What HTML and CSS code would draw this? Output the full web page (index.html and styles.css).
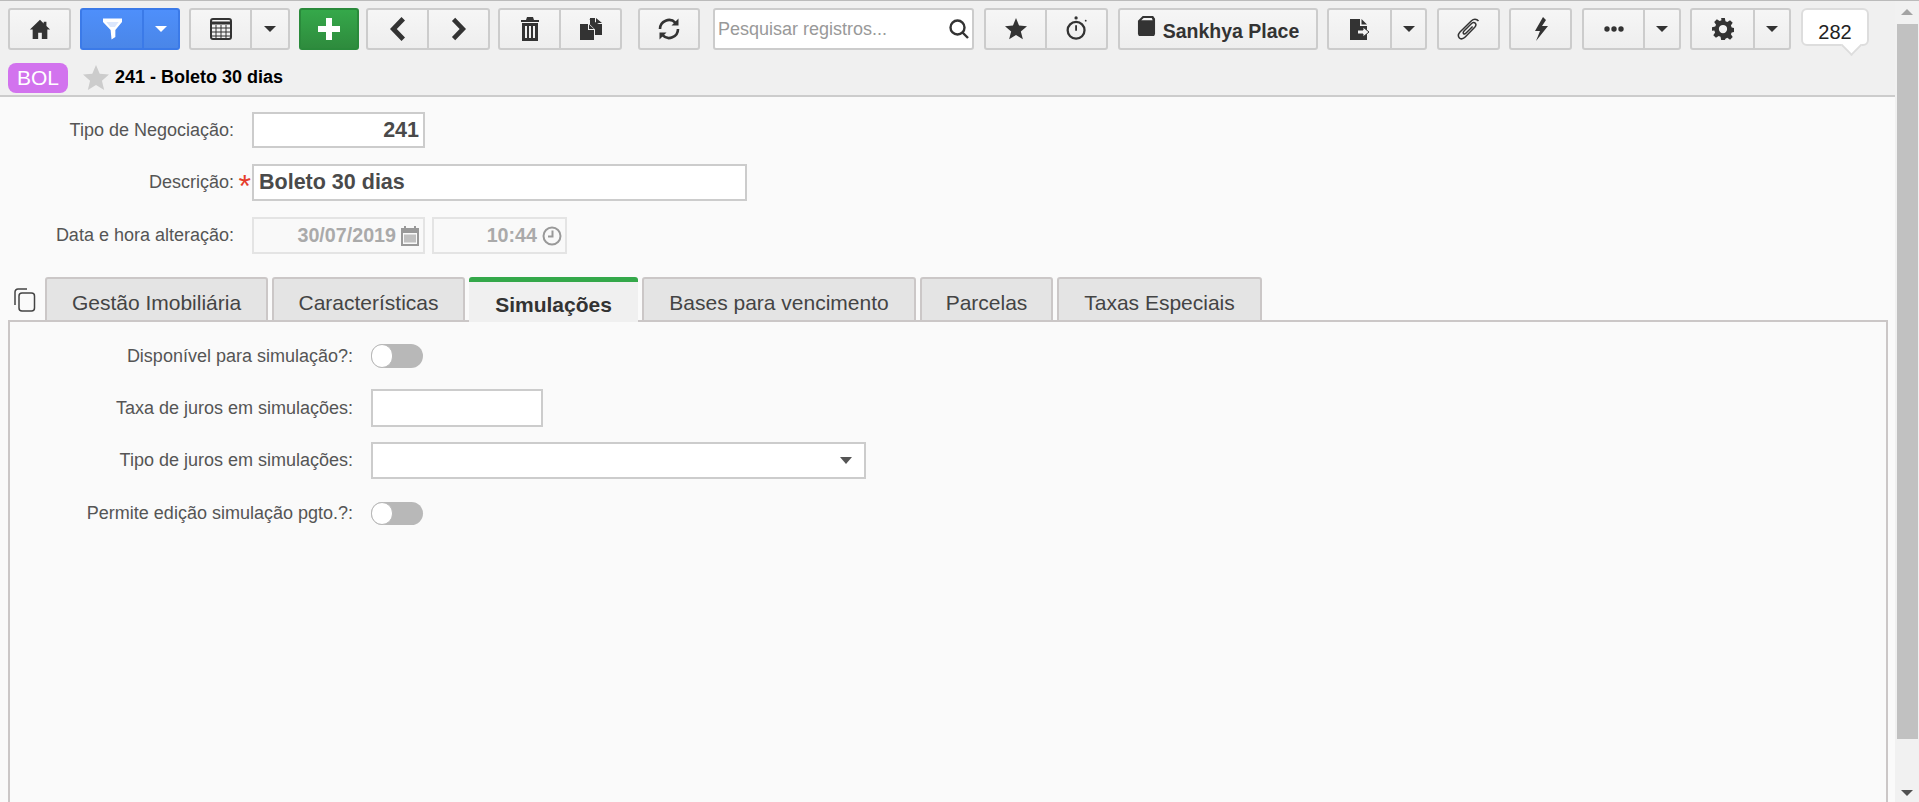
FILE: index.html
```html
<!DOCTYPE html>
<html lang="pt-BR">
<head>
<meta charset="utf-8">
<title>Tipo de Negociação</title>
<link rel="stylesheet" href="styles.css">
</head>
<body>
<div class="page">
  <main class="main">
    <header class="head">
      <div class="toolbar">
        <div class="group g63"><button class="btn"><svg class="ico" viewBox="0 0 24 24" width="22" height="22"><path d="M12 2 1 12.500h3V23h6v-7h4v7h6V12.500h3l-4-3.800V4h-3v1.900z"/></svg></button></div>
        <div class="group g100 split blue">
          <button class="btn"><svg viewBox="0 0 20 22" width="19" height="22"><path d="M0 0h20v3.500L13 12v7.500L9 22l-1-10L0 3.500z" fill="#fff"/><path d="M3.500 3.500h13L12.500 9h-5z" fill="#dbe7fd"/></svg></button>
          <button class="btn"><span class="caret white"></span></button>
        </div>
        <div class="group g101 split s59">
          <button class="btn"><svg viewBox="0 0 22 22" width="22" height="22" fill="none" stroke="#333"><rect x="1" y="1" width="20" height="20" rx="2" stroke-width="2"/><path d="M1 5h20" stroke-width="3"/><path d="M1 10h20M1 14h20M1 18h20M6 7v14M11 7v14M16 7v14" stroke-width="1"/></svg></button>
          <button class="btn"><span class="caret"></span></button>
        </div>
        <div class="group g60 green"><button class="btn"><svg viewBox="0 0 22 22" width="22" height="22" fill="#fff"><path d="M8 0h6v8h8v6h-8v8H8v-8H0V8h8z"/></svg></button></div>
        <div class="group g124 m8">
          <button class="btn"><svg class="ico" viewBox="0 0 16 24" width="16" height="24"><path d="M11.500 0 15 3.500 6.800 12 15 20.500 11.500 24 0 12z"/></svg></button>
          <button class="btn"><svg class="ico" viewBox="0 0 16 24" width="15" height="24"><path d="M4.500 0 1 3.500 9.200 12 1 20.500 4.500 24 16 12z"/></svg></button>
        </div>
        <div class="group g124 m8">
          <button class="btn"><svg class="ico" viewBox="0 0 18 24" width="18" height="24"><path d="M6 0h6l1 3h5v2H0V3h5zM1 6h16v18H1zm3 3v12h2V9zm4 0v12h2V9zm4 0v12h2V9z" fill-rule="evenodd"/></svg></button>
          <button class="btn"><svg class="ico" viewBox="0 0 22 22" width="22" height="22"><path d="M0 6h8v6h6v10H0zM9 6.500l5 4.500H9z"/><path d="M9 1h5v5h5v0z"/><path d="M10 0h5v6h7v11h-7v-5.500L9.500 6H10zM16 0l6 5h-6z"/></svg></button>
        </div>
        <div class="group g62 m13">
          <button class="btn"><svg viewBox="0 0 24 24" width="24" height="24" fill="none" stroke="#333" stroke-width="2.600"><path d="M3 12a9 9 0 0 1 15.500-6.200M21 12a9 9 0 0 1-15.500 6.200"/><path d="M21.500 1.500v7h-7z" fill="#333" stroke="none"/><path d="M2.500 22.500v-7h7z" fill="#333" stroke="none"/></svg></button>
        </div>
        <div class="group search m10">
          <span class="search-text">Pesquisar registros...</span>
          <svg viewBox="0 0 20 20" width="20" height="20" fill="none" stroke="#333" stroke-width="2.400"><circle cx="8.500" cy="8.500" r="7"/><path d="m13 13 6 6"/></svg>
        </div>
        <div class="group g124 m10">
          <button class="btn"><svg class="ico" viewBox="0 0 24 24" width="22" height="22"><path d="m12 0 3.300 8.300 8.700.7-6.700 5.600 2.200 8.700L12 18.500 4.500 23.300l2.200-8.700L0 9l8.700-.7z"/></svg></button>
          <button class="btn"><svg class="timer" viewBox="0 0 24 26" width="22" height="24" fill="none" stroke="#333" stroke-width="2.500"><circle cx="11" cy="15.500" r="9.200"/><circle cx="11" cy="2" r="1.800" fill="#333" stroke="none"/><path d="M11 10v6" stroke-width="2"/><circle cx="21.500" cy="5" r="1" fill="#333" stroke="none"/></svg></button>
        </div>
        <div class="group g200"><button class="btn place"><svg class="ico bag" viewBox="0 0 20 22" width="19" height="21"><path d="M1 6 6 1h11l2 3v16l-1 2H2l-1-2zM4.500 5.500h12L15.500 3H7z" fill-rule="evenodd"/></svg><span class="place-text">Sankhya Place</span></button></div>
        <div class="group g100 split s61 m10">
          <button class="btn"><svg viewBox="0 0 20 21" width="20" height="21"><path d="M0 0h10v7h7v14H0z" fill="#333"/><path d="M11.500 0 17 5.500h-5.500z" fill="#333"/><path d="M7.500 11H13V8l6 5-6 5v-3H7.500z" fill="#f2f2f2" stroke="#333"/></svg></button>
          <button class="btn"><span class="caret"></span></button>
        </div>
        <div class="group g63"><button class="btn"><svg viewBox="0 0 24 22" width="24" height="22" fill="none" stroke="#333" stroke-width="1.500"><path d="M21.500 3c-2-2.500-5-2.300-7-.3L3 14c-2 2.300-2 4.500-.6 6s3.800 1 5.800-1l9.500-9.700c1.500-1.700 1.500-3 .6-4s-2.500-1-4 .5L7 13c-1 1.200-1 2-.4 2.600s1.500.4 2.500-.6l6.500-6.500"/></svg></button></div>
        <div class="group g63 m10"><button class="btn"><svg class="ico" viewBox="0 0 14 24" width="14" height="24"><path d="M9 0 1 14h5L2 24l12-15H8l4-6z"/></svg></button></div>
        <div class="group g99 split s59">
          <button class="btn"><svg class="ico" viewBox="0 0 20 6" width="20" height="6"><circle cx="3" cy="3" r="2.700"/><circle cx="10" cy="3" r="2.700"/><circle cx="17" cy="3" r="2.700"/></svg></button>
          <button class="btn"><span class="caret"></span></button>
        </div>
        <div class="group g101 split s61 m10">
          <button class="btn"><svg class="ico" viewBox="0 0 24 24" width="22" height="22"><path d="M10 0h4l.7 3.500 2 .9 3-2 2.900 2.900-2 3 .9 2 3.500.7v4l-3.500.7-.9 2 2 3-2.900 2.900-3-2-2 .9L14 24h-4l-.7-3.500-2-.9-3 2-2.900-2.900 2-3-.9-2L0 14v-4l3.500-.7.9-2-2-3L5.300 1.400l3 2 2-.9zM12 7.500a4.500 4.500 0 1 0 0 9 4.500 4.500 0 0 0 0-9z" fill-rule="evenodd"/></svg></button>
          <button class="btn"><span class="caret"></span></button>
        </div>
        <div class="counter"><span class="count">282</span></div>
      </div>
      <div class="title-row">
        <span class="badge">BOL</span>
        <svg viewBox="0 0 28 28" width="26" height="26" fill="#ccc"><path d="m14 0 4 9.500 10 .8-7.600 6.600 2.400 10L14 21.600 5.200 27l2.400-10L0 10.300l10-.8z"/></svg>
        <span class="title">241 - Boleto 30 dias</span>
      </div>
    </header>
    <section class="form">
      <div class="row r1"><label class="lbl">Tipo de Negociação:</label><div class="inp short num">241</div></div>
      <div class="row r2"><label class="lbl">Descrição:<span class="req">*</span></label><div class="inp long strong">Boleto 30 dias</div></div>
      <div class="row r3"><label class="lbl">Data e hora alteração:</label>
        <div class="inp short dis">30/07/2019<svg viewBox="0 0 18 20" width="18" height="20" fill="#999"><path d="M3 0h2v2h8V0h2v2h3v18H0V2h3zM2 7v11h14V7z" fill-rule="evenodd"/><path d="M3 8.500h12v8H3z" opacity=".6"/></svg></div>
        <div class="inp time dis">10:44<svg viewBox="0 0 20 20" width="20" height="20" fill="none" stroke="#999" stroke-width="2"><circle cx="10" cy="10" r="8.500"/><path d="M10.500 4.500v6H6"/></svg></div>
      </div>
      <div class="tabs">
        <svg class="copy" viewBox="0 0 24 24" width="24" height="24" fill="none" stroke="#444" stroke-width="1.500"><path d="M2 17V4a3 3 0 0 1 3-3h9"/><rect x="6" y="5" width="15.500" height="18" rx="3"/></svg>
        <div class="tab t1">Gestão Imobiliária</div>
        <div class="tab t2">Características</div>
        <div class="tab t3 active">Simulações</div>
        <div class="tab t4">Bases para vencimento</div>
        <div class="tab t5">Parcelas</div>
        <div class="tab t6">Taxas Especiais</div>
      </div>
      <div class="panel">
        <div class="prow p1"><label class="plbl">Disponível para simulação?:</label><span class="toggle"><span class="knob"></span></span></div>
        <div class="prow p2"><label class="plbl">Taxa de juros em simulações:</label><div class="inp rate"></div></div>
        <div class="prow p3"><label class="plbl">Tipo de juros em simulações:</label><div class="inp select"><span class="caret dark"></span></div></div>
        <div class="prow p4"><label class="plbl">Permite edição simulação pgto.?:</label><span class="toggle"><span class="knob"></span></span></div>
      </div>
    </section>
  </main>
  <aside class="scrollbar">
    <span class="arrow up"></span>
    <span class="thumb"></span>
    <span class="arrow down"></span>
  </aside>
</div>
</body>
</html>
```
FILE: styles.css
```css
* { box-sizing: border-box; }
html, body { margin: 0; height: 100%; overflow: hidden; }
body { font-family: "Liberation Sans", Arial, sans-serif; color: #333; background: #fafafa; }
.page { display: flex; height: 802px; border-top: 1px solid #bbb; }
.main { width: 1895px; display: flex; flex-direction: column; overflow: hidden; }
.head { height: 96px; background: #f0f0f0; border-bottom: 2px solid #ccc; padding: 7px 0 0 8px; }
.toolbar { display: flex; height: 43px; }
.group { display: flex; flex: none; height: 42px; margin-right: 9px; border: 2px solid #ccc; border-radius: 3px; background: linear-gradient(#f6f6f6, #eee); }
.m8 { margin-right: 8px; }
.m10 { margin-right: 10px; }
.m13 { margin-right: 13px; }
.g60 { width: 60px; margin-right: 7px; }
.g62 { width: 62px; }
.g63 { width: 63px; }
.g99 { width: 99px; }
.g100 { width: 100px; }
.g101 { width: 101px; }
.g124 { width: 124px; }
.g200 { width: 200px; }
.g124.m8 { margin-right: 8px; }
.g124.m10 { margin-right: 10px; }
.g62.m13 { margin-left: 8px; }
.btn { flex: 1 1 0; display: flex; align-items: center; justify-content: center; height: 100%; padding: 0; background: none; border: 0; border-left: 2px solid #ccc; font: inherit; color: #333; }
.btn:first-child { border-left: 0; }
.split .btn:first-child { flex: none; width: 60px; }
.split.s59 .btn:first-child { width: 59px; }
.split.s61 .btn:first-child { width: 61px; }
.ico { fill: #333; }
.blue { background: linear-gradient(#4e8ffb, #4a86e8); border-color: #3b7ae8; }
.blue .btn { border-color: #3b7ae8; }
.green { background: linear-gradient(#35a84a, #2e8b3d); border-color: #2a8a3b; }
.caret { display: block; width: 0; height: 0; border-left: 6.500px solid transparent; border-right: 6.500px solid transparent; border-top: 6.500px solid #333; }
.caret.white { border-top-color: #fff; }
.search { width: 261px; background: #fff; align-items: center; justify-content: space-between; padding: 0 3px 0 3px; }
.search-text { font-size: 18px; color: #999; }
.timer { margin-top: -3px; }
.place { gap: 7px; }
.bag { margin-bottom: 8px; }
.place-text { margin-top: 4px; font-size: 19.500px; font-weight: 700; }
.counter { position: relative; flex: none; width: 68px; height: 38px; border: 2px solid #ddd; border-radius: 6px; background: #fff; font-size: 20px; color: #222; text-align: center; line-height: 44px; }
.counter::after { content: ""; position: absolute; right: 8px; bottom: -9px; width: 13px; height: 13px; background: #fff; border-right: 2px solid #ddd; border-bottom: 2px solid #ddd; transform: rotate(45deg); }
.count { position: relative; z-index: 1; }
.title-row { display: flex; align-items: center; gap: 6px; height: 31px; margin-top: 11px; }
.badge { width: 60px; height: 30px; border-radius: 8px; background: #d273ee; color: #fff; font-size: 21px; text-align: center; line-height: 30px; margin-right: 9px; }
.title { font-size: 18px; font-weight: 700; color: #000; }
.form { flex: 1; display: flex; flex-direction: column; padding: 0; }
.row { display: flex; align-items: center; gap: 7px; height: 37px; }
.r1 { margin-top: 15px; height: 36px; }
.r2 { margin-top: 16px; }
.r3 { margin-top: 16px; }
.lbl { position: relative; width: 234px; margin-right: 11px; text-align: right; font-size: 18px; color: #555; white-space: nowrap; }
.req { position: absolute; right: -17px; top: -2px; color: #e53c2b; font-size: 32px; line-height: 32px; }
.inp { display: flex; align-items: center; height: 100%; background: #fff; border: 2px solid #ccc; font-size: 21.500px; font-weight: 700; color: #4a4a4a; }
.short { width: 173px; justify-content: flex-end; padding: 0 4px; }
.long { width: 495px; padding: 0 5px; }
.time { width: 135px; justify-content: flex-end; padding: 0 3px; }
.dis { background: #f9f9f9; border-color: #e4e4e4; color: #aaa; gap: 5px; font-size: 19.700px; }
.tabs { position: relative; display: flex; gap: 4px; height: 43px; margin-top: 23px; padding-left: 45px; }
.copy { position: absolute; left: 13px; top: 11px; }
.tab { display: flex; align-items: center; justify-content: center; height: 45px; background: #e4e4e4; border: 2px solid #cbc7c7; border-radius: 3px 3px 0 0; font-size: 21px; color: #444; position: relative; z-index: 0; padding-top: 6px; }
.t1 { width: 223px; }
.t2 { width: 193px; }
.t3 { width: 169px; }
.t4 { width: 274px; }
.t5 { width: 133px; }
.t6 { width: 205px; }
.tab.active { background: #f0f0f0; border: 0; border-top: 5px solid #34a84a; font-weight: 700; color: #333; z-index: 2; height: 45px; padding-top: 5px; }
.panel { position: relative; z-index: 1; flex: 1; width: 1880px; margin-left: 8px; margin-bottom: -20px; background: #fafafa; border: 2px solid #cbc7c7; }
.prow { display: flex; align-items: center; }
.plbl { width: 343px; margin-right: 18px; text-align: right; font-size: 18px; color: #555; white-space: nowrap; }
.p1 { height: 24px; margin-top: 22px; }
.p2 { height: 38px; margin-top: 21px; }
.p3 { height: 37px; margin-top: 15px; }
.p4 { height: 23px; margin-top: 23px; }
.rate { width: 172px; }
.select { width: 495px; justify-content: flex-end; padding-right: 12px; }
.caret.dark { border-left-width: 6px; border-right-width: 6px; border-top-width: 7px; border-top-color: #555; }
.toggle { display: block; position: relative; width: 52px; height: 100%; background: #b8b8b8; border-radius: 12px; }
.knob { position: absolute; left: 0; top: 0; width: 22px; height: 100%; background: #fff; border: 1px solid #b8b8b8; border-radius: 12px; }
.scrollbar { position: relative; display: flex; flex-direction: column; align-items: center; width: 24px; background: #f1f1f1; }
.thumb { position: absolute; left: 2px; right: 1px; top: 23px; height: 715px; background: #c1c1c1; }
.arrow { position: absolute; left: 6px; width: 0; height: 0; border-left: 6px solid transparent; border-right: 6px solid transparent; }
.arrow.up { top: 8px; border-bottom: 6px solid #a3a3a3; }
.arrow.down { top: 789px; border-top: 6px solid #505050; }
```
